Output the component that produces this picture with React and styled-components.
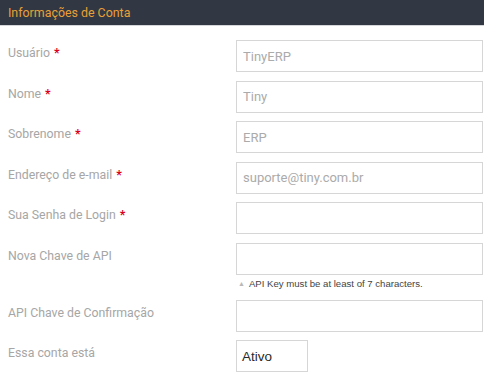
import React from "react";
import styled, { createGlobalStyle } from "styled-components";

const GlobalStyle = createGlobalStyle`
  html, body {
    margin: 0;
    padding: 0;
    background: #ffffff;
  }
  body {
    font-family: Roboto, "Liberation Sans", Arial, sans-serif;
  }
`;

const fields = [
  { label: "Usuário", required: true, value: "TinyERP" },
  { label: "Nome", required: true, value: "Tiny" },
  { label: "Sobrenome", required: true, value: "ERP" },
  { label: "Endereço de e-mail", required: true, value: "suporte@tiny.com.br" },
  { label: "Sua Senha de Login", required: true, value: "" },
  {
    label: "Nova Chave de API",
    value: "",
    hint: "API Key must be at least of 7 characters.",
  },
  { label: "API Chave de Confirmação", value: "" },
];

const AccountSection = () => {
  return (
    <Panel>
      <GlobalStyle />
      <Header>Informações de Conta</Header>
      <Form>
        {fields.map((f) => (
          <Row key={f.label}>
            <Label>
              {f.label}
              {f.required && <Star>*</Star>}
            </Label>
            <Field>
              <Input defaultValue={f.value} />
              {f.hint && (
                <Hint>
                  <Arrow>▲</Arrow>
                  {f.hint}
                </Hint>
              )}
            </Field>
          </Row>
        ))}
        <Row>
          <Label>Essa conta está</Label>
          <Field>
            <Status>Ativo</Status>
          </Field>
        </Row>
      </Form>
    </Panel>
  );
};

const Panel = styled.div`
  width: 484px;
  height: 382px;
  overflow: hidden;
`;

const Header = styled.div`
  height: 25px;
  background: #313743;
  border-bottom: 1px solid #d4d6da;
  color: #e9a036;
  font-size: 12.4px;
  line-height: 25px;
  padding-left: 8px;
`;

const Form = styled.div`
  padding: 14px 1px 0 8px;
  display: flex;
  flex-direction: column;
  gap: 8.6px;
`;

const Row = styled.div`
  display: grid;
  grid-template-columns: 228px 1fr;
  align-items: start;
`;

const Label = styled.div`
  color: #a6a6a6;
  font-size: 12.3px;
  padding-top: 5px;
  line-height: 16px;
`;

const Star = styled.span`
  color: #d9001b;
  font-weight: bold;
  margin-left: 4px;
`;

const Field = styled.div`
  display: flex;
  flex-direction: column;
`;

const Input = styled.input`
  box-sizing: border-box;
  width: 247px;
  height: 32px;
  border: 1px solid #d6d6d6;
  padding: 0 6px;
  font-family: Roboto, "Liberation Sans", Arial, sans-serif;
  font-size: 13px;
  color: #ababab;
  outline: none;
  background: #fff;
`;

const Hint = styled.div`
  display: flex;
  align-items: center;
  height: 15px;
  margin-top: 1px;
  font-family: "Liberation Sans", Arial, sans-serif;
  font-size: 9.6px;
  color: #444;
`;

const Arrow = styled.span`
  color: #b8b8b8;
  font-size: 7px;
  margin: 1px 4px 0 2px;
`;

const Status = styled.div`
  box-sizing: border-box;
  width: 72px;
  height: 32px;
  border: 1px solid #d6d6d6;
  padding-left: 5px;
  display: flex;
  align-items: center;
  font-family: "Liberation Sans", Arial, sans-serif;
  font-size: 13.5px;
  color: #2a2a2a;
`;

export default AccountSection;
